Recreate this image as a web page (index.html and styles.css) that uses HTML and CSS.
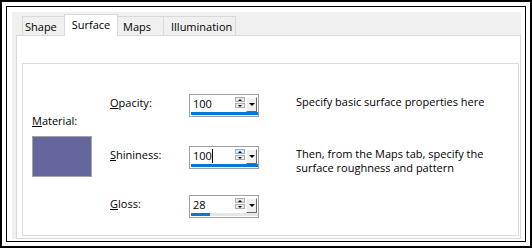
FILE: index.html
```html
<!DOCTYPE html>
<html lang="en">
<head>
    <meta charset="UTF-8">
    <title>Surface</title>
    <link rel="stylesheet" href="styles.css">
</head>
<body>
<div class="frame">
    <div class="frame-inner">
        <div class="dialog">
            <div class="tabs">
                <div class="tab tab-shape">Shape</div>
                <div class="tab tab-surface active">Surface</div>
                <div class="tab tab-maps">Maps</div>
                <div class="tab tab-illum">Illumination</div>
            </div>
            <div class="panel">
                <div class="group">
                    <div class="material">
                        <div class="label"><u>M</u>aterial:</div>
                        <div class="swatch"></div>
                    </div>

                    <div class="label field-label"><u>O</u>pacity:</div>
                    <div class="spin">
                        <div class="spin-row">
                            <span class="spin-value">100</span>
                            <div class="spin-arrows">
                                <span class="spin-btn up"></span>
                                <span class="spin-btn down"></span>
                            </div>
                            <span class="spin-drop"></span>
                        </div>
                        <div class="spin-bar"><div class="spin-fill" style="width: 100%"></div></div>
                    </div>
                    <div class="desc">Specify basic surface properties here</div>

                    <div class="label field-label"><u>S</u>hininess:</div>
                    <div class="spin">
                        <div class="spin-row">
                            <span class="spin-value">100<span class="caret"></span></span>
                            <div class="spin-arrows">
                                <span class="spin-btn up hot"></span>
                                <span class="spin-btn down"></span>
                            </div>
                            <span class="spin-drop"></span>
                        </div>
                        <div class="spin-bar"><div class="spin-fill" style="width: 100%"></div></div>
                    </div>
                    <div class="desc">Then, from the Maps tab, specify the<br>surface roughness and pattern</div>

                    <div class="label field-label"><u>G</u>loss:</div>
                    <div class="spin">
                        <div class="spin-row">
                            <span class="spin-value">28</span>
                            <div class="spin-arrows">
                                <span class="spin-btn up"></span>
                                <span class="spin-btn down"></span>
                            </div>
                            <span class="spin-drop"></span>
                        </div>
                        <div class="spin-bar"><div class="spin-fill" style="width: 28%"></div></div>
                    </div>
                    <div class="desc"></div>
                </div>
            </div>
        </div>
    </div>
</div>
</body>
</html>
```

FILE: styles.css
```css
* {
    margin: 0;
    padding: 0;
    box-sizing: border-box;
}
html, body {
    height: 100%;
}
body {
    background: #fff;
    font-family: "Open Sans", "Noto Sans", sans-serif;
    font-size: 11px;
    color: #000;
}
.frame {
    height: 248px;
    border: 2px solid #000;
    padding: 4px;
}
.frame-inner {
    height: 100%;
    border: 1px solid #000;
    padding: 5px 4px 2px 5px;
}
.dialog {
    height: 100%;
    display: flex;
    flex-direction: column;
    background: #f0f0f0;
    padding-left: 4px;
}

/* tabs */
.tabs {
    display: flex;
    align-items: flex-start;
    padding-top: 4px;
    padding-left: 6px;
}
.tab {
    height: 19px;
    border: 1px solid #d9d9d9;
    border-bottom: 0;
    margin-left: -1px;
    padding-top: 1px;
    line-height: 17px;
    text-align: center;
    white-space: nowrap;
}
.tab-shape { width: 43px; margin-left: 0; text-align: left; padding-left: 2px; }
.tab-surface { width: 54px; }
.tab-maps { width: 47px; text-align: left; padding-left: 5px; }
.tab-illum { width: 73px; text-align: left; padding-left: 7px; }
.tab.active {
    height: 22px;
    margin-top: -2px;
    margin-bottom: -1px;
    background: #fff;
    position: relative;
    z-index: 1;
}

.panel {
    flex: 1;
    display: flex;
    flex-direction: column;
    background: #fff;
    border: 1px solid #d9d9d9;
}
.group {
    flex: 1;
    margin: 27px 1px 2px 5px;
    border: 1px solid #dcdcdc;
    padding: 30px 0 0 9px;
    display: grid;
    grid-template-columns: 78px 79px 70px 1fr;
    grid-template-rows: 52px 49px 23px;
    align-items: start;
}
.label {
    line-height: 15px;
    white-space: nowrap;
}
.material {
    grid-column: 1;
    grid-row: 1 / 4;
    padding-top: 19px;
}
.swatch {
    width: 60px;
    height: 41px;
    margin-top: 8px;
    background: #66669e;
    border: 1px solid #a4a4a4;
}
.field-label {
    grid-column: 2;
    margin-top: 1px;
}
.desc {
    margin-left: 37px;
    margin-top: 1px;
    line-height: 14px;
    white-space: nowrap;
}

/* spin box */
.spin {
    grid-column: 3;
    width: 70px;
    height: 23px;
    border: 1px solid #a0a0a0;
    background: #fff;
}
.spin-row {
    height: 17px;
    display: flex;
    align-items: flex-start;
}
.spin-value {
    flex: 1;
    padding-left: 3px;
    line-height: 17px;
}
.caret {
    display: inline-block;
    width: 1px;
    height: 14px;
    background: #000;
    vertical-align: -3px;
}
.spin-arrows {
    width: 10px;
    margin-top: 2px;
    display: flex;
    flex-direction: column;
    gap: 1px;
}
.spin-btn {
    height: 5px;
    border: 1px solid #adadad;
    background: #e9e9e9;
    display: flex;
    align-items: center;
    justify-content: center;
}
.spin-btn.hot {
    background: #dbeaf7;
    border-color: #7eb4ea;
}
.spin-btn::after {
    content: "";
    border-left: 2px solid transparent;
    border-right: 2px solid transparent;
}
.spin-btn.up::after {
    border-bottom: 2px solid #000;
}
.spin-btn.down::after {
    border-top: 2px solid #000;
}
.spin-drop {
    width: 11px;
    height: 15px;
    margin: 2px 1px 0 1px;
    background: #f0f0f0;
    border: 1px solid;
    border-color: #fff #696969 #696969 #fff;
    display: flex;
    align-items: center;
    justify-content: center;
}
.spin-drop::after {
    content: "";
    border-left: 3px solid transparent;
    border-right: 3px solid transparent;
    border-top: 3px solid #000;
}
.spin-bar {
    height: 3px;
    margin: 0 0 1px 1px;
    width: 67px;
    background: #e6e6e6;
}
.spin-fill {
    height: 100%;
    background: #0078d7;
}
```
